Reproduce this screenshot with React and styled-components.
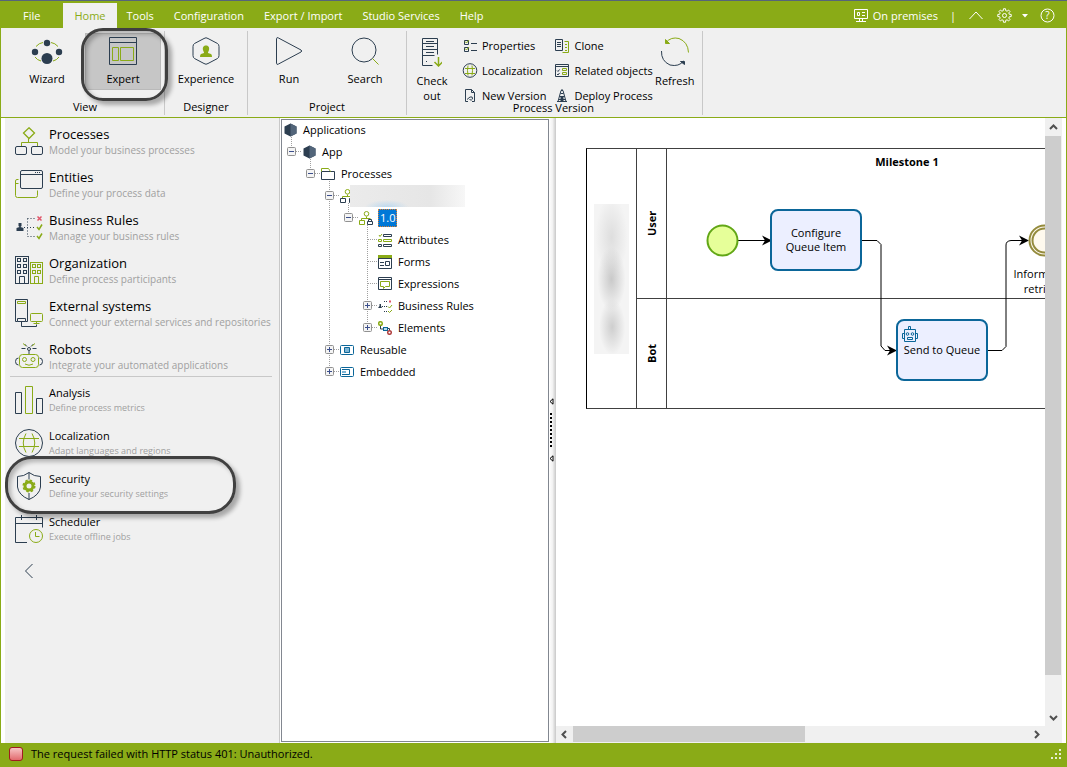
import React from "react";
import styled, { createGlobalStyle, css } from "styled-components";

const GREEN = "#8aab17";
const NAVY = "#2c3e50";
const BLUE = "#0b6699";

const GlobalStyle = createGlobalStyle`
    * { box-sizing:border-box; }
    body {
        margin:0;
        background:#fff;
        color:#000;
        font-family:"Open Sans", "Noto Sans", sans-serif;
        font-size:11px;
        line-height:16px;
    }
    button {
        font:inherit;
        color:inherit;
        border:0;
        padding:0;
        background:none;
    }
    ul { list-style:none; margin:0; padding:0; }
    svg { display:block; flex:none; }
`;

const Window = styled.div`
    display:flex;
    flex-direction:column;
    min-height:100vh;
    border-top:1px solid #56657a;
`;

/* ---------- title bar ---------- */

const TitleBar = styled.header`
    display:flex;
    justify-content:space-between;
    height:27px;
    padding:2px 12px 0 1px;
    background:${GREEN};
    color:#fff;
`;

const Tabs = styled.nav`
    display:flex;
`;

const Tab = styled.button`
    padding:0 ${props => props.$active ? 11 : 10}px;
    color:${props => props.$active ? GREEN : "#fff"};
    background:${props => props.$active ? "#f0f0f0" : "none"};
    ${props => props.$wide && css`padding:0 23px 0 22px;`}
`;

const Tools = styled.div`
    display:flex;
    align-items:center;
    gap:12px;
`;

const ToolButton = styled.button`
    display:flex;
    align-items:center;
    gap:${props => props.$gap || 5}px;
`;

/* ---------- ribbon ---------- */

const Ribbon = styled.div`
    display:flex;
    height:90px;
    padding:3px 0 2px;
    background:#f0f0f0;
    border:solid ${GREEN};
    border-width:0 1px 1px;
`;

const Group = styled.section`
    display:flex;
    flex-direction:column;
    padding:2px ${props => props.$right || 3}px 0 ${props => props.$left || 3}px;
    border-right:1px solid #c8c8c8;
`;

const GroupBody = styled.div`
    display:flex;
    height:67px;
`;

const GroupLabel = styled.div`
    text-align:center;
    line-height:16px;
`;

const BigButton = styled.button`
    position:relative;
    display:flex;
    flex-direction:column;
    align-items:center;
    gap:6px;
    width:${props => props.$narrow ? 44 : 76}px;
    height:${props => props.$tall ? 72 : 57}px;
    padding-top:4px;
    line-height:15px;
    background:${props => props.$pressed ? "#c6c6c6" : "none"};
    outline:${props => props.$pressed ? "1px solid #b9b9b9" : "none"};
    outline-offset:-1px;
`;

const CommandList = styled.ul`
    margin-left:8px;
`;

const Command = styled.button`
    display:flex;
    align-items:center;
    gap:4px;
    height:25px;
    white-space:nowrap;
`;

/* marker round a control */
const Callout = styled.span`
    position:absolute;
    z-index:2;
    top:${props => props.$top}px;
    left:${props => props.$left}px;
    width:${props => props.$width}px;
    height:${props => props.$height}px;
    border:3px solid #404040;
    border-radius:${props => props.$radius}px;
    box-shadow:4px 4px 4px rgba(0,0,0,.3), inset 3px 3px 4px rgba(0,0,0,.25);
    pointer-events:none;
`;

/* ---------- body ---------- */

const Body = styled.main`
    display:flex;
    flex:1;
    border:solid ${GREEN};
    border-width:0 1px;
    padding:0 4px;
`;

const Sidebar = styled.aside`
    width:275px;
    background:#f0f0f0;
    border-right:1px solid #c8c8c8;
`;

const MenuList = styled.ul`
    margin:0 7px 0 5px;
    border-bottom:${props => props.$divider ? "1px solid #c8c8c8" : "0"};
`;

const MenuItem = styled.li`
    position:relative;
`;

const MenuButton = styled.button`
    display:flex;
    gap:6px;
    width:100%;
    height:43px;
    padding:9px 0 0 5px;
    text-align:left;
    white-space:nowrap;
`;

const MenuText = styled.span`
    display:block;
    margin-top:-1px;
`;

const MenuTitle = styled.span`
    display:block;
    font-size:${props => props.$small ? 11 : 13}px;
`;

const MenuHint = styled.span`
    display:block;
    color:#a0a0a0;
    font-size:${props => props.$small ? 9 : 10}px;
    line-height:${props => props.$small ? 14 : 16}px;
`;

const Collapse = styled.button`
    margin:14px 19px;
`;

const TreePanel = styled.div`
    width:268px;
    margin:1px 0 1px 1px;
    border:1px solid #828790;
    background:#fff;
`;

const Tree = styled.ul`
    margin-top:-1px;
`;

const TreeRow = styled.li`
    display:flex;
    align-items:center;
    height:22px;
`;

const TreeIcon = styled.span`
    flex:none;
    width:20px;
    padding-left:1px;
`;

const TreeLabel = styled.span`
    padding:0 ${props => props.$selected ? 2 : 1}px;
    line-height:18px;
    ${props => props.$selected && css`
        color:#fff;
        background:#0078d7;
        outline:1px dotted #e08030;
        outline-offset:-1px;
    `}
`;

const Redacted = styled.span`
    z-index:1;
    width:${props => props.$tall ? 35 : 115}px;
    height:${props => props.$tall ? 150 : 22}px;
    margin-left:${props => props.$tall ? 0 : -9}px;
    background:${props => props.$tall
        ? "radial-gradient(ellipse 14px 32px at 50% 50%, #c9c9c9, transparent), radial-gradient(ellipse 13px 28px at 52% 82%, #cecece, transparent), radial-gradient(ellipse 16px 40px at 50% 22%, #dedede, transparent), #f4f4f4"
        : "radial-gradient(ellipse 22px 7px at 32% 100%, #bcd8ee, transparent), linear-gradient(90deg, #ebebeb, #e6e6e6 70%, #f7f7f7)"};
`;

const Splitter = styled.div`
    display:flex;
    flex-direction:column;
    align-items:flex-start;
    gap:8px;
    width:7px;
    padding-top:280px;
    background:linear-gradient(90deg, #fff, #f2f2f2 50%, #c8c8c8);
`;

const Dots = styled.span`
    width:2px;
    height:34px;
    margin-left:1px;
    background:repeating-linear-gradient(#000 0 2px, transparent 2px 4px);
`;

const Viewer = styled.div`
    display:grid;
    flex:1;
    min-width:0;
    grid-template-columns:minmax(0, 1fr) 17px;
    grid-template-rows:1fr 17px;
    background:#f0f0f0;
`;

const ScrollBar = styled.div`
    display:flex;
    flex-direction:${props => props.$vertical ? "column" : "row"};
    align-items:center;
    padding:${props => props.$vertical ? "1px 1px 0 0" : "0 0 1px"};
`;

const ScrollArrow = styled.button`
    display:flex;
    align-items:center;
    justify-content:center;
    width:17px;
    height:17px;
`;

const Thumb = styled.div`
    align-self:stretch;
    flex:${props => props.$size};
    background:#cdcdcd;
`;

const Track = styled.div`
    flex:${props => props.$size};
`;

/* ---------- diagram ---------- */

const Canvas = styled.div`
    position:relative;
    overflow:hidden;
    background:#fff;
`;

const Pool = styled.div`
    position:absolute;
    top:30px;
    left:30px;
    display:grid;
    grid-template-columns:50px 30px 700px;
    grid-template-rows:150px 109px;
    border:1px solid #404040;
    border-left-color:#000;
`;

const PoolName = styled.div`
    grid-row:1 / 3;
    display:flex;
    align-items:center;
    justify-content:center;
    border-right:1px solid #404040;
`;

/* turned upside down, so its left and top borders end up right and bottom */
const LaneName = styled.div`
    display:flex;
    align-items:center;
    justify-content:center;
    border-left:1px solid #404040;
    border-top:${props => props.$last ? 0 : 1}px solid #404040;
    font-weight:700;
    writing-mode:vertical-rl;
    transform:rotate(180deg);
`;

const Lane = styled.div`
    border-bottom:${props => props.$last ? 0 : 1}px solid #404040;
`;

const Connectors = styled.svg`
    position:absolute;
    top:0;
    left:0;
`;

const Node = styled.div`
    position:absolute;
    top:${props => props.$y}px;
    left:${props => props.$x}px;
`;

const Task = styled(Node)`
    display:flex;
    align-items:center;
    justify-content:center;
    width:92px;
    height:62px;
    border:2px solid ${BLUE};
    border-radius:8px;
    background:#ecefff;
    text-align:center;
    line-height:14px;
    white-space:pre-line;
`;

const TaskBadge = styled.span`
    position:absolute;
    top:4px;
    left:3px;
`;

const Caption = styled(Node)`
    width:100px;
    text-align:center;
    white-space:pre-line;
    line-height:15px;
    font-weight:${props => props.$bold ? 700 : 400};
`;

const StatusBar = styled.footer`
    display:flex;
    align-items:center;
    gap:8px;
    height:24px;
    padding:0 5px 2px 9px;
    background:${GREEN};
`;

const StatusLight = styled.span`
    width:14px;
    height:14px;
    border:1px solid #a01c20;
    border-radius:3px;
    background:linear-gradient(#f7c4c4, #e26a6e);
`;

const StatusText = styled.span`
    flex:1;
`;

/* ---------- drawings ---------- */

function Icon({ size = 28, width = size, box, children, color = NAVY, stroke = 1 }) {
    return <svg width={width} height={size} viewBox={box || `0 0 ${width} ${size}`} fill="none" stroke={color} strokeWidth={stroke} aria-hidden="true">
        {children}
    </svg>;
}

const windowsOf = (xs, ys) => xs.map(x => ys.map(y => <rect key={x + "-" + y} x={x} y={y} width="3" height="3" />));

const icons = {
    processes: <Icon>
        <g stroke={GREEN}><path strokeWidth="1.3" d="M14 .8 19.500 6 14 11.500 8.500 6z" /><path d="M13.500 11.500v4M6.500 19v-3.500h16V19" /></g>
        <rect x=".5" y="19.500" width="11" height="8" rx="1.500" />
        <rect x="16.500" y="19.500" width="11" height="8" rx="1.500" />
    </Icon>,
    entities: <Icon>
        <path stroke={GREEN} d="M3.500 9.500H2Q.5 9.500.5 11v14.500q0 2 2 2h18q2 0 2-2V20.500M.5 13.500h3" />
        <rect x="5.500" y=".5" width="22" height="18" rx="1.500" />
        <path d="M5.500 4.500h22" /><path strokeDasharray="1 1" d="M20 2.500h6" />
    </Icon>,
    rules: <Icon>
        <path fill={NAVY} stroke="none" d="M3.500 10h3v3l-1 1 3 1v3H1.500v-3l3-1-1-1z" />
        <path strokeDasharray="1 2" d="M9 14.500h11M12.500 5.500h8M12.500 23.500h8M12.500 5.500v18" />
        <path stroke="#e0566a" strokeWidth="1.500" d="m22.500 3.500 4 4m0-4-4 4" />
        <path stroke={GREEN} strokeWidth="1.500" d="m22 14 2 2.500 3-5M22 23l2 2.500 3-5" />
    </Icon>,
    organization: <Icon>
        <rect x=".5" y=".5" width="13" height="27" />
        {windowsOf([2.5, 8.5], [2.5, 8.5, 14.5])}
        <path d="M4.500 27.500v-7h5v7" />
        <g stroke={GREEN}>
            <rect x="15.500" y="6.500" width="12" height="21" />
            {windowsOf([17.5, 22.5], [8.5, 14.5])}
            <path d="M19.500 27.500v-7h4v7" />
        </g>
    </Icon>,
    external: <Icon>
        <path d="M2.500 22.500h-2V.5h12v22h-2m-8 0v-3h8v3zM6.500 23v4.500h15v-2" />
        <g stroke={GREEN}><path d="M2.500 2.500h8v2h-8zM18.500 24.500h6M21.500 22.500v2" /><rect x="15.500" y="14.500" width="12" height="8" rx="1" /></g>
    </Icon>,
    robots: <Icon>
        <path d="M14 9v3M9.500 2l2.500 2.500M18.500 2 16 4.500M6.500 6.500h4m7 0h4M3.500 16Q.5 16 .5 19.500t3 3.500M24.500 16q3 0 3 3.500t-3 3.500" />
        <circle cx="14" cy="7" r="1.500" />
        <g stroke={GREEN}><path d="M8 1.500 11 4M20 1.500 17 4" /><rect x="4.500" y="12.500" width="19" height="13" rx="3" /><circle cx="9.500" cy="17.500" r="2" /><circle cx="18" cy="17.500" r="2" /><path d="M10 22q4 2.500 8 0" /></g>
    </Icon>,
    analysis: <Icon>
        <path d="M.5 6.500h6v21h-6zM21.500 12.500h6v15h-6z" /><path stroke={GREEN} d="M10.500.5h7v27h-7z" />
    </Icon>,
    localization: <Icon>
        <g stroke={GREEN}><path d="M4 9.500h20M4 17.500h20M11 4.500q-5.500 9.500 0 19M17 4.500q5.500 9.500 0 19" /></g>
        <circle cx="14" cy="14" r="13.500" />
    </Icon>,
    security: <Icon>
        <path d="M14 .5Q9 4.500 2.500 4.500V15Q3.500 23 14 27.500 24.500 23 25.500 15V4.500Q19 4.500 14 .5zM14 .5v7M14 21v6.500" />
        <circle cx="14" cy="14" r="4" stroke={GREEN} strokeWidth="3" />
        <circle cx="14" cy="14" r="5.800" stroke={GREEN} strokeWidth="1.500" strokeDasharray="2.500 2.055" />
    </Icon>,
    scheduler: <Icon>
        <path d="M12 27.500H.5v-25h27v10M.5 8.500h27M6.500 0v5M21.500 0v5" />
        <g stroke={GREEN}><circle cx="21" cy="21" r="6.500" /><path d="M20.500 17v4.500h4" /></g>
    </Icon>,

    wizard: <Icon width={32} size={28}>
        <path stroke={GREEN} d="M5 9.500q3-3.500 7-4M20 5.500q4 .5 7 4M4 20q2 3 6 4M28 20q-2 3-6 4" />
        <g fill={NAVY} stroke="none"><circle cx="16" cy="6" r="3.200" /><circle cx="4" cy="15" r="3.200" /><circle cx="28" cy="15" r="3.200" /><circle cx="16" cy="21.500" r="5.500" /></g>
    </Icon>,
    expert: <Icon>
        <path d="M.5.500h27v27H.5zM.5 5.500h27" /><path stroke={GREEN} d="M3.500 10.500h6v13h-6zM11.500 10.500h13v13h-13z" />
    </Icon>,
    experience: <Icon>
        <path d="M12 1.500q2-1.500 4 0l9.500 5q1.500 1 1.500 3v9q0 2-1.500 3l-9.500 5q-2 1.500-4 0l-9.500-5Q1 20.500 1 18.500v-9q0-2 1.500-3z" />
        <path fill={GREEN} stroke="none" d="M14 8.500c3 0 3.500 2.500 3 4.500-.5 1.500-1 2-1 3l3 1q1 .5 1 3H8q0-2.500 1-3l3-1c0-1-.5-1.500-1-3-.5-2 0-4.500 3-4.500z" />
    </Icon>,
    run: <Icon><path d="M1.500 1.500Q1.500 0 3.500 1L26 13q1.500 1 0 2L3.500 27q-2 1-2-.5z" /></Icon>,
    search: <Icon><circle cx="13" cy="13" r="12" /><path stroke={GREEN} d="m21.500 21.500 6 6" /></Icon>,
    checkout: <Icon width={20} size={30}>
        <path d="M15.500 17.500V1.500H.5v27h10M.5 6.500h15M.5 12.500h15M.5 18.500h12M4 4.500h8M4 9.500h8M4 15.500h8M4 24.500h1" />
        <path stroke={GREEN} strokeWidth="1.500" d="M16.500 20v9m-4-4 4 4 4-4" />
    </Icon>,
    refresh: <Icon width={28} size={30}>
        <path stroke={GREEN} d="M27.500 15.500Q27 5 18 1.500q-8-2-13 4" /><path stroke={GREEN} fill={GREEN} d="M4.500 2.500v4h4z" />
        <path d="M.5 14Q0 24 9 28q9 2 13.500-4" /><path fill={NAVY} d="M19.500 24.500h4v3z" />
    </Icon>,

    properties: <Icon width={16} size={15}>
        <path d="M2.500 2.500h4v4h-4zM2.500 9.500h4v4h-4zM9 5.500h6M9 12.500h6" /><path stroke={GREEN} d="m3 3.500 1.500 1.500L7 2M3 10.500l1.500 1.500L7 9" />
    </Icon>,
    globe: <Icon width={16} size={15}><circle cx="8" cy="7.500" r="6.800" /><path stroke={GREEN} d="M3 5.500h10M3 10.500h10M6 2.500q-1 5 0 10M10 2.500q1 5 0 10" /></Icon>,
    version: <Icon width={16} size={15}><path d="M6 13.500H3.500V1.500h6l3 3v9H10M9.500 1.500v3h3M5 11.500l3-2.500M8 9q3-1 2.500 2-1 2-3 .5" /></Icon>,
    clone: <Icon width={16} size={15}><path d="M8.500 12.500h-7V1.500h7v11zM3 4.500h4M3 6.500h4M3 8.500h4" /><path stroke={GREEN} d="M10.500 3.500h4v11h-6M11 6.500h2M11 9.500h2M11 12.500h2" /></Icon>,
    related: <Icon width={16} size={15}><path d="M1.500 1.500h13v12h-13zM1.500 3.500h13M3 7.500l1 1 1.500-2M3 11l1 1 1.500-2" /><path stroke={GREEN} d="M8.500 5.500h4v2h-4zM8.500 9.500h4v2h-4z" /></Icon>,
    deploy: <Icon width={16} size={15}><path d="M7 2.500h2l3 11H4zM8 1v2M3 13.500h10M6.500 5.500h3M5.500 8.500h5M5 11.500h6" /><path fill={NAVY} d="M7 9h2v4.500H7z" /></Icon>,

    hexagon: <Icon width={15} size={14}><path fill={NAVY} stroke="none" d="m7.500.5 6 3v7l-6 3-6-3v-7z" /><path fill="#52657a" stroke="none" d="m7.500.5 6 3v7l-6 3z" /></Icon>,
    folder: <Icon width={15} size={14}><path d="M.5 4.500h13v8H.5z" /><path stroke={GREEN} d="M.5 4.500v-3h7l2 3" /></Icon>,
    flow: <Icon width={15} size={14}><g stroke={GREEN}><circle cx="7.500" cy="2.800" r="2.300" /><path d="M7.500 5.500v2m-5 2v-2h9v2" /></g><path d="M.5 9.500h5v4h-5zM9.500 9.500h5v4h-5z" /></Icon>,
    locked: <Icon width={15} size={14}><g stroke={GREEN}><circle cx="7.500" cy="2.800" r="2.300" /><path d="M7.500 5.500v2m-5 2v-2h9M.5 9.500h5v4h-5z" /></g><path d="M8.500 10.500h5v3h-5zM9.500 10V8.500h3V10" /></Icon>,
    attributes: <Icon width={15} size={14}><path d="M5.500 1.500h8v2h-8zM.5 11.500h3v2h-3zM5.500 11.500h8v2h-8z" /><path stroke={GREEN} d="M.5 6.500h3v2h-3zM5.500 6.500h8v2h-8zM1 2l1 1.500L4 1" /></Icon>,
    forms: <Icon width={15} size={14}><path d="M.5.500h13v13H.5zM2 7.500h4M2 10.500h4M7.500 6.500h4v4h-4zM1 3.500h12" /><path fill={GREEN} stroke="none" d="M0 0h14v3H0z" /></Icon>,
    expressions: <Icon width={15} size={14}><path d="M.5.500h13v12H.5zM.5 2.500h13" /><path stroke={GREEN} d="M2.500 4.500h9v5h-4l-2 2v-2h-3z" /></Icon>,
    ruleTree: <Icon width={15} size={14}><path strokeDasharray="1 1" d="M4 7.500h6M6 2.500h4M6 12.500h4" /><path fill={NAVY} stroke="none" d="M1.500 5h1.500v2l1 2H0l1.500-2z" /><path stroke="#e0566a" strokeWidth="2" d="M11 2.500h2" /><path stroke={GREEN} d="m10 7.500 1.500 1.500L14 6M10 12l1.500 1.500L14 11" /></Icon>,
    elements: <Icon width={15} size={14}><circle cx="2.500" cy="2.500" r="1.800" stroke={GREEN} strokeWidth="1.500" /><path d="M2.500 5v3h3M9.500 7.500h2V10" /><rect x="5.500" y="6.500" width="4" height="3" fill="#b9dcef" stroke={BLUE} /><circle cx="11.500" cy="11.500" r="1.800" stroke="#b04040" strokeWidth="1.500" /></Icon>,
    reusable: <Icon width={15} size={12} color={BLUE}><rect x=".5" y="1.500" width="13" height="9" rx="1" /><path fill="#7fb6d6" d="M4.500 3.500h5v5h-5z" /></Icon>,
    embedded: <Icon width={15} size={12} color={BLUE}><rect x=".5" y="1.500" width="13" height="9" rx="1" /><path d="M2 6h4" strokeWidth="2" stroke="#7fb6d6" /><path d="M2 3.500h7.500v5H2" /></Icon>
};

function Arrow({ dir }) {
    const turn = { left: 0, up: 90, right: 180, down: 270 }[dir];
    return <svg width="9" height="9" viewBox="0 0 9 9" fill="none" stroke="#505050" strokeWidth="2">
        <path d="M6 1 2.500 4.500 6 8" transform={`rotate(${turn} 4.500 4.500)`} />
    </svg>;
}

function SplitArrow() {
    return <Icon width={5} size={7} color="#000"><path fill="#fff" d="M4 .8v5.400L1 3.500z" /></Icon>;
}

function Gear() {
    // eight teeth: one outline turned round the hub
    const points = [];
    for (let i = 0; i < 8; i++) {
        [[-14, 5], [-9, 6.8], [9, 6.8], [14, 5]].forEach(([turn, r]) => {
            const a = (i * 45 + turn) * Math.PI / 180;
            points.push((7.5 + r * Math.sin(a)).toFixed(2) + "," + (7.5 - r * Math.cos(a)).toFixed(2));
        });
    }
    return <Icon width={15} size={15} color="#fff"><polygon points={points.join(" ")} /><circle cx="7.500" cy="7.500" r="2" /></Icon>;
}

function RobotFace() {
    return <Icon width={18} size={18} color={BLUE}>
        <path d="M7.500 4.500v-3h2v3M3.500 4.500h11v12h-11zM3.500 8.500h-2v5h2M14.500 8.500h2v5h-2M6.500 12.500h5v2h-5z" />
        <circle cx="6.500" cy="9" r="1.300" /><circle cx="11.500" cy="9" r="1.300" />
    </Icon>;
}

/* ---------- data ---------- */

const tabs = ["File", "Home", "Tools", "Configuration", "Export / Import", "Studio Services", "Help"];

const mainMenu = [
    ["processes", "Processes", "Model your business processes"],
    ["entities", "Entities", "Define your process data"],
    ["rules", "Business Rules", "Manage your business rules"],
    ["organization", "Organization", "Define process participants"],
    ["external", "External systems", "Connect your external services and repositories"],
    ["robots", "Robots", "Integrate your automated applications"]
];

const smallMenu = [
    ["analysis", "Analysis", "Define process metrics"],
    ["localization", "Localization", "Adapt languages and regions"],
    ["security", "Security", "Define your security settings"],
    ["scheduler", "Scheduler", "Execute offline jobs"]
];

// guides: one letter per column, "|" line, "." empty, "L" last branch, "T" branch; toggle sits on the last one
const tree = [
    { guides: "", icon: "hexagon", label: "Applications" },
    { guides: "L", toggle: "-", icon: "hexagon", label: "App" },
    { guides: ".L", toggle: "-", icon: "folder", label: "Processes" },
    { guides: "..T", toggle: "-", icon: "flow", redacted: true },
    { guides: "..|L", toggle: "-", icon: "locked", label: "1.0", selected: true },
    { guides: "..|.T", icon: "attributes", label: "Attributes" },
    { guides: "..|.T", icon: "forms", label: "Forms" },
    { guides: "..|.T", icon: "expressions", label: "Expressions" },
    { guides: "..|.T", toggle: "+", icon: "ruleTree", label: "Business Rules" },
    { guides: "..|.L", toggle: "+", icon: "elements", label: "Elements" },
    { guides: "..T", toggle: "+", icon: "reusable", label: "Reusable" },
    { guides: "..L", toggle: "+", icon: "embedded", label: "Embedded" }
];

function Guide({ type, toggle }) {
    const end = type === "L" ? 10 : 22;
    return <svg width="19" height="22" viewBox="0 0 19 22" fill="none" overflow="visible">
        {type !== "." && <path stroke="#a0a0a0" strokeDasharray="1 1" d={`M9.500 -4V${end}`} />}
        {(type === "L" || type === "T") && <path stroke="#a0a0a0" strokeDasharray="1 1" d="M10 10.500h9" />}
        {toggle && <g>
            <rect x="5.500" y="6.500" width="8" height="8" rx="1" fill="#f4f4f4" stroke="#919191" />
            <path stroke="#3c4f8c" d={toggle === "+" ? "M7 10.500h5M9.500 8v5" : "M7 10.500h5"} />
        </g>}
    </svg>;
}

function Menu({ items, small, divider }) {
    return <MenuList $divider={divider}>
        {items.map(([icon, title, hint]) => <MenuItem key={title}>
            <MenuButton>
                {icons[icon]}
                <MenuText>
                    <MenuTitle $small={small}>{title}</MenuTitle>
                    <MenuHint $small={small}>{hint}</MenuHint>
                </MenuText>
            </MenuButton>
            {title === "Security" && <Callout $top={-7} $left={-5} $width={231} $height={58} $radius={27} />}
        </MenuItem>)}
    </MenuList>;
}

function Commands({ items }) {
    return <CommandList>
        {items.map(([icon, label]) => <li key={label}><Command>{icons[icon]}{label}</Command></li>)}
    </CommandList>;
}

function Header() {
    return <TitleBar>
        <Tabs>
            {tabs.map(name => <Tab key={name} $active={name === "Home"} $wide={name === "File"}>{name}</Tab>)}
        </Tabs>
        <Tools>
            <ToolButton>
                <Icon width={14} size={15} color="#fff"><path d="M.5 1.500h13v9H.5zM3.500 4.500h2v3h-2zM8 4.500h3M8 7.500h3M5.500 11v2.500M8.500 11v2.500M2 13.500h10" /></Icon>
                On premises
            </ToolButton>
            <span>|</span>
            <ToolButton aria-label="Collapse ribbon"><Icon width={17} size={9} color="#fff"><path d="m1.500 8 6.500-7 6.500 7" /></Icon></ToolButton>
            <ToolButton aria-label="Settings" $gap={10}>
                <Gear />
                <Icon width={6} size={4} color="none"><path fill="#fff" d="M0 0h6L3 3.500z" /></Icon>
            </ToolButton>
            <ToolButton aria-label="Help">
                <Icon width={15} size={15} color="#fff"><circle cx="7.500" cy="7.500" r="6.500" /><text x="7.500" y="11" fontSize="10" textAnchor="middle" fill="#fff" stroke="none">?</text></Icon>
            </ToolButton>
        </Tools>
    </TitleBar>;
}

function RibbonBar() {
    return <Ribbon>
        <Group $left={8}>
            <GroupBody>
                <BigButton>{icons.wizard}Wizard</BigButton>
                <BigButton $pressed>
                    {icons.expert}Expert
                    <Callout $top={-5} $left={-4} $width={87} $height={73} $radius={22} />
                </BigButton>
            </GroupBody>
            <GroupLabel>View</GroupLabel>
        </Group>
        <Group>
            <GroupBody><BigButton>{icons.experience}Experience</BigButton></GroupBody>
            <GroupLabel>Designer</GroupLabel>
        </Group>
        <Group>
            <GroupBody>
                <BigButton>{icons.run}Run</BigButton>
                <BigButton>{icons.search}Search</BigButton>
            </GroupBody>
            <GroupLabel>Project</GroupLabel>
        </Group>
        <Group $right={5}>
            <GroupBody>
                <BigButton $narrow $tall>{icons.checkout}<span>Check<br />out</span></BigButton>
                <Commands items={[["properties", "Properties"], ["globe", "Localization"], ["version", "New Version"]]} />
                <Commands items={[["clone", "Clone"], ["related", "Related objects"], ["deploy", "Deploy Process"]]} />
                <BigButton $narrow>{icons.refresh}Refresh</BigButton>
            </GroupBody>
            <GroupLabel>Process Version</GroupLabel>
        </Group>
    </Ribbon>;
}

function Diagram() {
    return <Canvas>
        <Pool>
            <PoolName><Redacted $tall /></PoolName>
            <LaneName>User</LaneName>
            <Lane />
            <LaneName $last>Bot</LaneName>
            <Lane $last />
        </Pool>
        <Connectors width="520" height="300" viewBox="0 0 520 300" fill="none" stroke="#000">
            <path d="M182 122.500h30M306 122.500h15l4 4V228l4 4.500h8M432 232.500h14l4-4V127q0-4 5-4.500h12" />
            <g fill="#000" stroke="none">
                <path d="m216 122.500-10-5 3 5-3 5zM341 232.500l-10-5 3 5-3 5zM473 122.500l-10-5 3 5-3 5z" />
            </g>
            <circle cx="166.500" cy="122.500" r="15" fill="#e6ff99" stroke="#62a716" strokeWidth="2" />
            <circle cx="488.500" cy="122.500" r="15" fill="#fef9ee" stroke="#948b3d" strokeWidth="2" />
            <circle cx="488.500" cy="122.500" r="12" stroke="#948b3d" strokeWidth="2" />
        </Connectors>
        <Caption $bold $x={301} $y={36}>Milestone 1</Caption>
        <Task $x={214} $y={91}>{"Configure\nQueue Item"}</Task>
        <Task $x={340} $y={201}>
            <TaskBadge><RobotFace /></TaskBadge>
            Send to Queue
        </Task>
        <Caption $x={438} $y={148}>{"Information\nretrived"}</Caption>
    </Canvas>;
}

export default function App() {
    return <>
        <GlobalStyle />
        <Window>
            <Header />
            <RibbonBar />
            <Body>
                <Sidebar>
                    <Menu items={mainMenu} divider />
                    <Menu items={smallMenu} small />
                    <Collapse aria-label="Collapse menu"><Icon width={10} size={16}><path d="m8.500 1-7 7 7 7" /></Icon></Collapse>
                </Sidebar>
                <TreePanel>
                    <Tree>
                        {tree.map((row, i) => <TreeRow key={i}>
                            {row.guides.split("").map((type, n) =>
                                <Guide key={n} type={type} toggle={n === row.guides.length - 1 && row.toggle} />)}
                            <TreeIcon>{icons[row.icon]}</TreeIcon>
                            {row.redacted ? <Redacted /> : <TreeLabel $selected={row.selected}>{row.label}</TreeLabel>}
                        </TreeRow>)}
                    </Tree>
                </TreePanel>
                <Splitter>
                    <SplitArrow />
                    <Dots />
                    <SplitArrow />
                </Splitter>
                <Viewer>
                    <Diagram />
                    <ScrollBar $vertical>
                        <ScrollArrow aria-label="Scroll up"><Arrow dir="up" /></ScrollArrow>
                        <Thumb $size={94} />
                        <Track $size={6} />
                        <ScrollArrow aria-label="Scroll down"><Arrow dir="down" /></ScrollArrow>
                    </ScrollBar>
                    <ScrollBar>
                        <ScrollArrow aria-label="Scroll left"><Arrow dir="left" /></ScrollArrow>
                        <Thumb $size={51} />
                        <Track $size={49} />
                        <ScrollArrow aria-label="Scroll right"><Arrow dir="right" /></ScrollArrow>
                    </ScrollBar>
                </Viewer>
            </Body>
            <StatusBar>
                <StatusLight />
                <StatusText role="status">The request failed with HTTP status 401: Unauthorized.</StatusText>
                <Icon width={12} size={12} color="none"><path fill="#e8eed2" d="M9 1h2v2H9zM5 5h2v2H5zM9 5h2v2H9zM1 9h2v2H1zM5 9h2v2H5zM9 9h2v2H9z" /></Icon>
            </StatusBar>
        </Window>
    </>;
}
